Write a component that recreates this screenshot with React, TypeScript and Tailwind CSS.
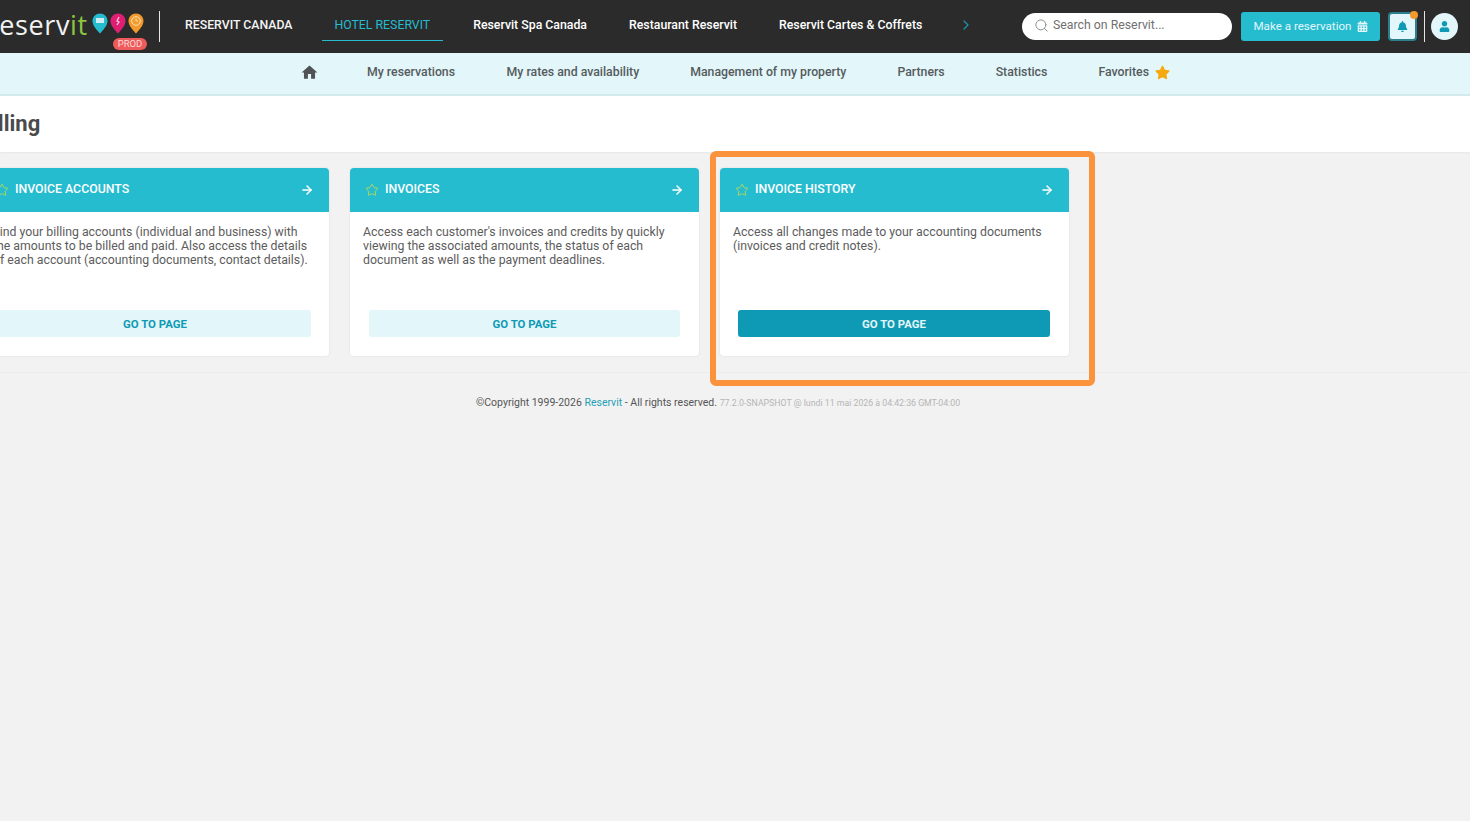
import React from "react";
import { Search, Star, ArrowRight, ChevronRight } from "lucide-react";
import { FaStar, FaCalendarAlt, FaBell, FaUser } from "react-icons/fa";
import { MdHome } from "react-icons/md";

function Pin({ color, children }: { color: string; children?: React.ReactNode }) {
  return (
    <svg width="16" height="21" viewBox="0 0 16 21" className="shrink-0">
      <path d="M8 0.5C3.8 0.5 0.5 3.8 0.5 8c0 5 5.2 9.8 7.5 12.5C10.3 17.8 15.5 13 15.5 8 15.5 3.8 12.2 0.5 8 0.5Z" fill={color} />
      {children}
    </svg>
  );
}

function Card({ title, lines, active, btn }: { title: string; lines: string[]; active?: boolean; btn: string }) {
  return (
    <div className="w-[349px] h-[188px] shrink-0 bg-white rounded-[4px] shadow-[0_0_3px_rgba(0,0,0,0.08)] flex flex-col overflow-hidden">
      <div className="h-[44px] bg-[#25bcd0] flex items-center pl-[15px] pr-[15px] text-white">
        <Star size={14} strokeWidth={1.5} className="text-[#c0dc50] shrink-0" />
        <span className="ml-[6px] text-[12.3px] font-medium mb-[2px]">{title}</span>
        <ArrowRight size={14} strokeWidth={2.5} className="ml-auto" />
      </div>
      <div className="px-[13px] pt-[13px] text-[12.3px] leading-[14px] text-[#5c5c5c] h-[98px] whitespace-nowrap">
        {lines.map((l) => (
          <div key={l}>{l}</div>
        ))}
      </div>
      <div
        className={`${btn} h-[27px] pt-[2px] rounded-[3px] flex items-center justify-center text-[11.4px] font-bold ${
          active ? "bg-[#0e9ab5] text-[#e3f6f9]" : "bg-[#e3f6f9] text-[#0e9ab5]"
        }`}
      >
        GO TO PAGE
      </div>
    </div>
  );
}

export default function App() {
  const font = { fontFamily: "Roboto, 'Liberation Sans', sans-serif" };
  return (
    <div style={font} className="relative w-[1470px] h-[821px] overflow-hidden bg-[#f2f2f2]">
      <header className="h-[53px] bg-[#2b2b2b] flex items-center text-white">
        <div className="relative flex items-center w-[159px] h-full shrink-0 overflow-hidden">
          <span style={{ fontFamily: "'Open Sans', sans-serif" }} className="ml-[-18px] text-[27px] leading-none mb-[5px] tracking-[0.6px] font-medium text-[#f2f2f2]">
            Reserv<span className="text-[#8cc63f]">it</span>
          </span>
          <div className="flex gap-[2px] ml-[4px] mb-[7px]">
            <Pin color="#25bcd0"><rect x="4" y="5" width="8" height="5" fill="#cdeff4" /></Pin>
            <Pin color="#e01f73"><path d="M9 4 7 8l2 1-2 3" stroke="#f7c9dc" strokeWidth="1.3" fill="none" /></Pin>
            <Pin color="#f39a2c"><circle cx="8" cy="8" r="4.3" fill="none" stroke="#fbe0b8" strokeWidth="1" /><path d="M8 5.5V8h2" stroke="#fbe0b8" strokeWidth="1" fill="none" /></Pin>
          </div>
          <span className="absolute left-[113px] top-[38px] w-[34px] h-[12px] rounded-full bg-[#ef5b5b] text-[9.5px] leading-[12px] text-center text-[#fbd9d9]">PROD</span>
        </div>
        <div className="w-px h-[31px] bg-[#e5e5e5] shrink-0" />
        <nav className="flex items-center text-[12.3px] font-medium ml-[25px] h-full whitespace-nowrap pb-[3px]">
          <span className="text-[#f5f5f5]">RESERVIT CANADA</span>
          <span className="relative ml-[42px] text-[#25bcd0] font-normal">
            HOTEL RESERVIT
            <span className="absolute left-[-12px] right-[-13px] top-[24px] h-px bg-[#25bcd0]" />
          </span>
          <span className="ml-[43px]">Reservit Spa Canada</span>
          <span className="ml-[42px]">Restaurant Reservit</span>
          <span className="ml-[42px]">Reservit Cartes &amp; Coffrets</span>
          <ChevronRight size={16} strokeWidth={2} className="ml-[36px] text-[#1d8ea3]" />
        </nav>
        <div className="absolute left-[1022px] top-[13px] w-[210px] h-[27px] rounded-full bg-white flex items-center pl-[12px] pb-[2px]">
          <Search size={15} strokeWidth={1.5} className="text-[#8a8a8a]" />
          <span className="ml-[4px] text-[12.3px] text-[#707070]">Search on Reservit...</span>
        </div>
        <div className="absolute left-[1241px] top-[12px] w-[139px] h-[29px] rounded-[3px] bg-[#25bcd0] flex items-center justify-center gap-[5px] text-[11.6px] text-[#e3f6f9]">
          Make a reservation
          <FaCalendarAlt size={11} />
        </div>
        <div className="absolute left-[1388px] top-[12px] w-[29px] h-[29px] rounded-[4px] bg-[#e3f6f9] border-2 border-[#2d7f8f] flex items-center justify-center">
          <FaBell size={11} className="text-[#0e9ab5]" />
          <span className="absolute right-[-3px] top-[-3px] w-[8px] h-[8px] rounded-full bg-[#f39a2c]" />
        </div>
        <div className="absolute left-[1424px] top-[11px] w-px h-[31px] bg-[#e5e5e5]" />
        <div className="absolute left-[1431px] top-[13px] w-[27px] h-[27px] rounded-full bg-[#e3f6f9] flex items-center justify-center">
          <FaUser size={11} className="text-[#0e9ab5]" />
        </div>
      </header>

      <div className="h-[43px] bg-[#e3f6f9] border-b-2 border-[#d3ebef] flex items-center pl-[300px] pb-[2px] text-[12.3px] font-medium text-[#555b5e] whitespace-nowrap">
        <MdHome size={19} className="text-[#4f5356]" />
        <span className="ml-[48px]">My reservations</span>
        <span className="ml-[51.5px]">My rates and availability</span>
        <span className="ml-[51px]">Management of my property</span>
        <span className="ml-[51px]">Partners</span>
        <span className="ml-[51px]">Statistics</span>
        <span className="ml-[51px]">Favorites</span>
        <FaStar size={15} className="ml-[6px] text-[#f5a90f]" />
      </div>

      <div className="h-[56px] bg-white shadow-[0_1px_2px_rgba(0,0,0,0.05)] flex items-center overflow-hidden">
        <h1 className="ml-[-22px] text-[22px] font-bold text-[#4a4a4a] mb-[1px]">Billing</h1>
      </div>

      <main className="flex gap-[21px] ml-[-20px] mt-[16px]">
        <Card
          btn="ml-[19px] mr-[18px]"
          title="INVOICE ACCOUNTS"
          lines={[
            "Find your billing accounts (individual and business) with",
            "the amounts to be billed and paid. Also access the details",
            "of each account (accounting documents, contact details).",
          ]}
        />
        <Card
          btn="ml-[19px] mr-[19px]"
          title="INVOICES"
          lines={[
            "Access each customer's invoices and credits by quickly",
            "viewing the associated amounts, the status of each",
            "document as well as the payment deadlines.",
          ]}
        />
        <Card
          btn="ml-[18px] mr-[19px]"
          active
          title="INVOICE HISTORY"
          lines={["Access all changes made to your accounting documents", "(invoices and credit notes)."]}
        />
      </main>

      <footer className="mt-[16px] border-t border-[#ececec] pt-[23px] pl-[476px] text-[10.5px] leading-[14px] text-[#555] whitespace-nowrap">
        ©Copyright 1999-2026 <span className="text-[#1f9fb5]">Reservit</span> - All rights reserved.{" "}
        <span className="text-[8.75px] text-[#b5b5b5]">77.2.0-SNAPSHOT @ lundi 11 mai 2026 à 04:42:36 GMT-04:00</span>
      </footer>

      <div className="absolute left-[710px] top-[151px] w-[385px] h-[235px] border-[6px] border-[#fb923c] rounded-[6px] pointer-events-none" />
    </div>
  );
}
